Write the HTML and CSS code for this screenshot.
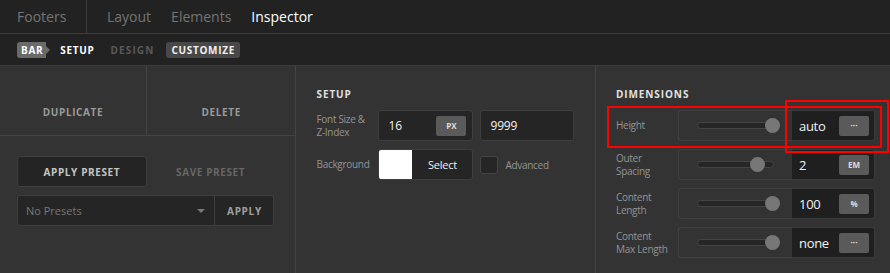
FILE: index.html
```html
<!DOCTYPE html>
<html>
<head>
    <meta charset="UTF-8">
    <title>Inspector</title>
    <link rel="stylesheet" href="styles.css">
</head>
<body>
    <header class="topbar">
        <div class="tab-group">
            <span class="tab">Footers</span>
        </div>
        <div class="tab-group main">
            <span class="tab">Layout</span>
            <span class="tab">Elements</span>
            <span class="tab active">Inspector</span>
        </div>
    </header>

    <nav class="subbar">
        <span class="crumb">BAR</span>
        <span class="sub-item">SETUP</span>
        <span class="sub-item muted">DESIGN</span>
        <span class="sub-item pill">CUSTOMIZE</span>
    </nav>

    <main class="panels">
        <section class="panel panel-actions">
            <div class="actions">
                <button class="action">DUPLICATE</button>
                <button class="action">DELETE</button>
            </div>
            <div class="presets">
                <div class="preset-buttons">
                    <button class="btn-dark">APPLY PRESET</button>
                    <button class="btn-ghost">SAVE PRESET</button>
                </div>
                <div class="preset-select">
                    <span class="select-text">No Presets</span>
                    <span class="caret"></span>
                    <button class="select-apply">APPLY</button>
                </div>
            </div>
        </section>

        <section class="panel panel-setup">
            <h2 class="panel-title">SETUP</h2>
            <div class="field-row">
                <label class="field-label">Font Size &amp;<br>Z-Index</label>
                <div class="input">
                    <span class="value">16</span>
                    <span class="unit">PX</span>
                </div>
                <div class="input narrow">
                    <span class="value">9999</span>
                </div>
            </div>
            <div class="field-row">
                <label class="field-label">Background</label>
                <div class="input color-input">
                    <span class="swatch"></span>
                    <span class="select-label">Select</span>
                </div>
                <div class="check-wrap">
                    <span class="checkbox"></span>
                    <span class="check-label">Advanced</span>
                </div>
            </div>
        </section>

        <section class="panel panel-dims">
            <h2 class="panel-title">DIMENSIONS</h2>
            <div class="dim-row">
                <label class="field-label">Height</label>
                <div class="slider"><div class="track"><span class="thumb" style="left: 100%"></span></div></div>
                <div class="dim-value"><span class="value">auto</span><span class="unit">···</span></div>
            </div>
            <div class="dim-row">
                <label class="field-label">Outer<br>Spacing</label>
                <div class="slider"><div class="track"><span class="thumb" style="left: 80%"></span></div></div>
                <div class="dim-value"><span class="value">2</span><span class="unit">EM</span></div>
            </div>
            <div class="dim-row">
                <label class="field-label">Content<br>Length</label>
                <div class="slider"><div class="track"><span class="thumb" style="left: 100%"></span></div></div>
                <div class="dim-value"><span class="value">100</span><span class="unit">%</span></div>
            </div>
            <div class="dim-row">
                <label class="field-label">Content<br>Max Length</label>
                <div class="slider"><div class="track"><span class="thumb" style="left: 100%"></span></div></div>
                <div class="dim-value"><span class="value">none</span><span class="unit">···</span></div>
            </div>

            <div class="mark mark-row"></div>
            <div class="mark mark-value"></div>
        </section>
    </main>
</body>
</html>
```

FILE: styles.css
```css
* {
    box-sizing: border-box;
}
body {
    margin: 0;
    background-color: #333333;
    font-family: "Open Sans", "Liberation Sans", sans-serif;
    color: #999;
    overflow: hidden;
}
button {
    font-family: inherit;
    cursor: pointer;
}

/* top tabs */
.topbar {
    display: flex;
    height: 34px;
    background-color: #222222;
    border-bottom: 1px solid #3c3c3c;
}
.tab-group {
    display: flex;
    align-items: center;
    padding: 0 17px;
    gap: 20px;
}
.tab-group:first-child {
    width: 87px;
    border-right: 1px solid #3c3c3c;
}
.tab-group.main {
    padding-left: 20px;
}
.tab {
    font-size: 14px;
    color: #747474;
}
.tab.active {
    color: #ffffff;
}

/* sub nav */
.subbar {
    display: flex;
    align-items: center;
    height: 32px;
    padding: 0 17px;
    background-color: #222222;
    border-bottom: 1px solid #3c3c3c;
}
.sub-item,
.crumb {
    font-size: 10px;
    font-weight: bold;
    letter-spacing: 0.7px;
    color: #ffffff;
}
.crumb {
    position: relative;
    background-color: #6a6a6a;
    border-radius: 3px 0 0 3px;
    padding: 0 3px 0 4px;
    line-height: 16px;
    margin-right: 14px;
}
.crumb::after {
    content: "";
    position: absolute;
    right: -4px;
    top: 4px;
    border-left: 4px solid #6a6a6a;
    border-top: 4px solid transparent;
    border-bottom: 4px solid transparent;
}
.sub-item {
    margin-right: 16px;
}
.sub-item.muted {
    color: #595959;
    letter-spacing: 1.1px;
    margin-right: 12px;
}
.sub-item.pill {
    background-color: #484848;
    border-radius: 3px;
    padding: 0 5px;
    line-height: 16px;
    color: #f0f0f0;
}

/* panels */
.panels {
    display: flex;
    height: 207px;
}
.panel {
    border-right: 1px solid #444;
}
.panel-actions {
    width: 297px;
}
.panel-setup {
    width: 300px;
    padding: 0 20px;
}
.panel-dims {
    position: relative;
    flex: 1;
    border-right: none;
    padding: 0 15px 0 20px;
}

.actions {
    display: flex;
    height: 70px;
    border-bottom: 1px solid #444;
}
.action {
    flex: 1;
    background: none;
    border: none;
    color: #9a9a9a;
    font-size: 10px;
    font-weight: bold;
    letter-spacing: 0.6px;
    padding-top: 24px;
}
.action:first-child {
    flex: 0 0 147px;
    border-right: 1px solid #444;
}

.presets {
    padding: 20px 21px 0 17px;
}
.preset-buttons {
    display: flex;
    margin-bottom: 8px;
}
.preset-buttons button {
    flex: 1;
    height: 31px;
    font-size: 10px;
    font-weight: bold;
    letter-spacing: 0.6px;
}
.btn-dark {
    background-color: #242424;
    border: 1px solid #3e3e3e;
    border-radius: 3px;
    color: #c4c4c4;
}
.btn-ghost {
    background: none;
    border: none;
    color: #666;
}
.preset-select {
    display: flex;
    align-items: center;
    height: 31px;
    background-color: #252525;
    border: 1px solid #3e3e3e;
    border-radius: 3px;
}
.select-text {
    flex: 1;
    padding-left: 8px;
    font-size: 11px;
    color: #777;
}
.caret {
    border-top: 4px solid #777;
    border-left: 4px solid transparent;
    border-right: 4px solid transparent;
    margin-right: 9px;
}
.select-apply {
    width: 59px;
    height: 100%;
    background: none;
    border: none;
    border-left: 1px solid #3e3e3e;
    color: #a0a0a0;
    font-size: 10px;
    font-weight: bold;
    letter-spacing: 0.7px;
}

.panel-title {
    margin: 22px 0 10px;
    font-size: 10px;
    line-height: 12px;
    font-weight: bold;
    letter-spacing: 0.9px;
    color: #e0e0e0;
}

.field-row,
.dim-row {
    display: flex;
    align-items: center;
    height: 31px;
    margin-bottom: 8px;
}
.field-label {
    width: 62px;
    flex-shrink: 0;
    font-size: 10px;
    letter-spacing: -0.3px;
    line-height: 13px;
    color: #949494;
}
.input {
    display: flex;
    align-items: center;
    flex-shrink: 0;
    width: 95px;
    height: 31px;
    margin-right: 7px;
    padding: 0 6px 0 9px;
    background-color: #252525;
    border: 1px solid #3e3e3e;
    border-radius: 3px;
}
.input.narrow {
    width: 94px;
    margin-right: 0;
}
.value {
    flex: 1;
    font-size: 12px;
    letter-spacing: -0.2px;
    color: #f2f2f2;
}
.unit {
    width: 30px;
    height: 20px;
    line-height: 20px;
    text-align: center;
    background-color: #5a5a5a;
    border-radius: 2px;
    font-size: 8px;
    font-weight: bold;
    color: #dcdcdc;
}

.color-input {
    padding: 0;
    overflow: hidden;
}
.swatch {
    width: 33px;
    height: 100%;
    background-color: #ffffff;
}
.select-label {
    flex: 1;
    text-align: center;
    font-size: 11px;
    letter-spacing: -0.2px;
    color: #f0f0f0;
}
.check-wrap {
    display: flex;
    align-items: center;
}
.checkbox {
    width: 18px;
    height: 18px;
    background-color: #262626;
    border: 1px solid #444;
    border-radius: 3px;
    margin-right: 7px;
}
.check-label {
    font-size: 10px;
    letter-spacing: -0.3px;
    color: #949494;
}

.slider {
    display: flex;
    align-items: center;
    width: 114px;
    height: 31px;
    padding: 0 18px;
    border: 1px solid #404040;
    border-right: none;
    border-radius: 3px 0 0 3px;
}
.track {
    position: relative;
    flex: 1;
    height: 7px;
    background-color: #262626;
    border: 1px solid #444;
    border-radius: 4px;
}
.thumb {
    position: absolute;
    top: 50%;
    width: 15px;
    height: 15px;
    margin: -7.5px 0 0 -8px;
    background-color: #777;
    border-radius: 50%;
}
.dim-value {
    display: flex;
    align-items: center;
    width: 83px;
    height: 31px;
    padding: 0 5px 0 7px;
    background-color: #1f1f1f;
    border: 1px solid #3a3a3a;
    border-left: none;
    border-radius: 0 3px 3px 0;
}
.dim-value .value {
    font-size: 13px;
    letter-spacing: -0.3px;
}

/* red annotation frames */
.mark {
    position: absolute;
    border: 2px solid #ff0000;
    pointer-events: none;
}
.mark-row {
    left: 11px;
    top: 40px;
    width: 275px;
    height: 42px;
}
.mark-value {
    left: 189px;
    top: 34px;
    width: 104px;
    height: 53px;
}
```
